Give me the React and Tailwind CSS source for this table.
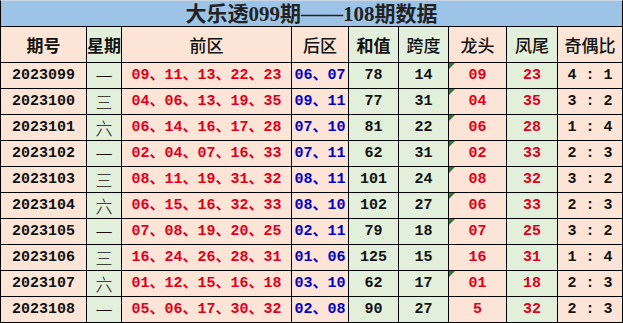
const PINK = 'bg-[#fce4d6]'
const GREEN = 'bg-[#e2efda]'

const headers = [
  { label: '期号', bg: PINK, bold: true },
  { label: '星期', bg: GREEN, bold: true },
  { label: '前区', bg: PINK },
  { label: '后区', bg: PINK },
  { label: '和值', bg: GREEN, bold: true },
  { label: '跨度', bg: GREEN },
  { label: '龙头', bg: PINK },
  { label: '凤尾', bg: GREEN },
  { label: '奇偶比', bg: PINK },
]

const rows = [
  ['2023099', '一', '09、11、13、22、23', '06、07', '78', '14', '09', '23', '4 : 1', true],
  ['2023100', '三', '04、06、13、19、35', '09、11', '77', '31', '04', '35', '3 : 2', true],
  ['2023101', '六', '06、14、16、17、28', '07、10', '81', '22', '06', '28', '1 : 4', true],
  ['2023102', '一', '02、04、07、16、33', '07、11', '62', '31', '02', '33', '2 : 3', true],
  ['2023103', '三', '08、11、19、31、32', '08、11', '101', '24', '08', '32', '3 : 2', true],
  ['2023104', '六', '06、15、16、32、33', '08、10', '102', '27', '06', '33', '2 : 3', true],
  ['2023105', '一', '07、08、19、20、25', '02、11', '79', '18', '07', '25', '3 : 2', true],
  ['2023106', '三', '16、24、26、28、31', '01、06', '125', '15', '16', '31', '1 : 4', false],
  ['2023107', '六', '01、12、15、16、18', '03、10', '62', '17', '01', '18', '2 : 3', true],
  ['2023108', '一', '05、06、17、30、32', '02、08', '90', '27', '5', '32', '2 : 3', false],
]

const mono = "font-['Liberation_Mono','Noto_Sans_CJK_SC',monospace] font-bold text-[15px]"
const cjk = "font-['Noto_Sans_CJK_SC',sans-serif] text-[17px]"
const red = 'text-[#e0001b]'
const blue = 'text-[#0000cc]'

function Cell({ bg, className = '', children }) {
  return (
    <div className={`${bg} relative flex items-center justify-center whitespace-pre leading-none ${className}`}>
      {children}
    </div>
  )
}

export default function App() {
  return (
    <div className="w-[623px] h-[323px] bg-black border border-black border-t-[#c9d6e3] grid grid-cols-[85px_34px_169px_56px_49px_49px_57px_50px_64px] grid-rows-[25px_35px_repeat(10,25px)] gap-px">
      {/* title */}
      <div className="col-span-9 bg-[#9dc3e6] flex items-center justify-center pt-[2px] font-['Liberation_Serif','Noto_Sans_CJK_SC',serif] font-bold text-[21px] leading-none text-[#222]">
        大乐透099期——108期数据
      </div>

      {/* header */}
      {headers.map((h) => (
        <Cell key={h.label} bg={h.bg} className={`${cjk} text-[#111] ${h.bold ? 'font-bold' : 'font-medium'}`}>
          {h.label}
        </Cell>
      ))}

      {/* data */}
      {rows.map((r) => (
        <div key={r[0]} className="contents">
          <Cell bg={PINK} className={`${mono} text-[#111]`}>{r[0]}</Cell>
          <Cell bg={GREEN} className={`${cjk} font-light text-[#111]`}>{r[1]}</Cell>
          <Cell bg={PINK} className={`${mono} ${red}`}>{r[2]}</Cell>
          <Cell bg={PINK} className={`${mono} ${blue}`}>{r[3]}</Cell>
          <Cell bg={GREEN} className={`${mono} text-[#111]`}>{r[4]}</Cell>
          <Cell bg={GREEN} className={`${mono} text-[#111]`}>{r[5]}</Cell>
          <Cell bg={PINK} className={`${mono} ${red}`}>
            {r[9] && (
              <span className="absolute top-0 left-0 w-0 h-0 border-t-[6px] border-t-[#2e7d32] border-r-[6px] border-r-transparent" />
            )}
            {r[6]}
          </Cell>
          <Cell bg={GREEN} className={`${mono} ${red}`}>{r[7]}</Cell>
          <Cell bg={PINK} className={`${mono} text-[#111]`}>{r[8]}</Cell>
        </div>
      ))}
    </div>
  )
}
